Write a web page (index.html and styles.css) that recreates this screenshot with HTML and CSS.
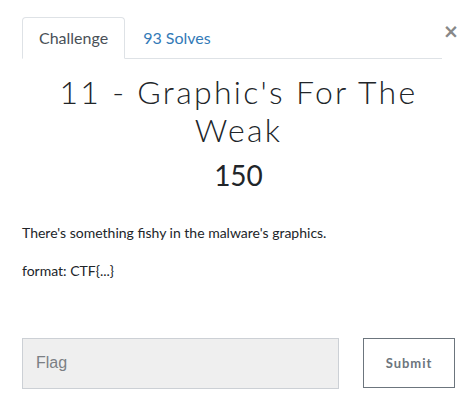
FILE: index.html
```html
<!DOCTYPE html>
<html>
<head>
<meta charset="utf-8">
<link rel="stylesheet" href="styles.css">
</head>
<body>
<div class="modal">
  <div class="head">
    <ul class="tabs">
      <li class="tab active">Challenge</li>
      <li class="tab link">93 Solves</li>
    </ul>
    <span class="close">&times;</span>
  </div>
  <h3 class="name">11 - Graphic's For The Weak</h3>
  <h4 class="value">150</h4>
  <div class="desc">
    <p>There's something fishy in the malware's graphics.</p>
    <p>format: CTF{...}</p>
  </div>
  <div class="submit-row">
    <input class="flag" type="text" placeholder="Flag">
    <button class="btn">Submit</button>
  </div>
</div>
</body>
</html>
```
FILE: styles.css
```css
html, body { margin: 0; padding: 0; background: #fff; }
body { font-family: Lato, "Open Sans", sans-serif; color: #212529; }
.modal { padding: 17px 14px 0 22px; }
.head { display: flex; align-items: flex-start; }
.tabs {
  list-style: none; margin: 0; padding: 0; display: flex; flex: 1;
  border-bottom: 1px solid #dee2e6;
}
.tab {
  font-size: 16px; line-height: 22px; padding: 9px 16px 9px 16px;
  border: 1px solid transparent; border-top-left-radius: 4px; border-top-right-radius: 4px;
  margin-bottom: -1px;
}
.tab.active { color: #495057; border-color: #dee2e6 #dee2e6 #fff; background: #fff; }
.tab.link { color: #337ab7; padding-left: 17px; }
.close {
  font-family: "DejaVu Sans", sans-serif; font-size: 19px; line-height: 19px; color: #888;
  font-weight: bold; margin: 5px 0 0 1px; width: 12px; text-align: center;
}
.name {
  font-family: Lato, sans-serif; font-weight: 300; font-size: 32px; line-height: 38.4px;
  letter-spacing: 2.3px; text-align: center; margin: 14px 0 0; color: #212529;
  padding: 0 10px;
}
.value {
  font-family: Lato, sans-serif; font-weight: 400; font-size: 28px; line-height: 34px;
  text-align: center; margin: 8px 0 0; color: #212529;
}
.desc { margin-top: 30px; font-size: 14px; line-height: 21px; }
.desc p { margin: 0 0 17px; }
.submit-row { display: flex; justify-content: space-between; margin-top: 57px; }
.flag {
  width: 317px; height: 51px; box-sizing: border-box; background: #efefef;
  border: 1px solid #ccd0d5; padding: 0 13px; font-family: "Liberation Sans", Arial, sans-serif;
  font-size: 16px; color: #495057; outline: none;
}
.flag::placeholder { color: #7b7f84; }
.btn {
  width: 92px; height: 50px; box-sizing: border-box; background: #fff;
  border: 1px solid #6c757d; color: #6c757d; font-family: Lato, sans-serif;
  font-weight: 700; font-size: 13px; letter-spacing: 1px;
}
```
